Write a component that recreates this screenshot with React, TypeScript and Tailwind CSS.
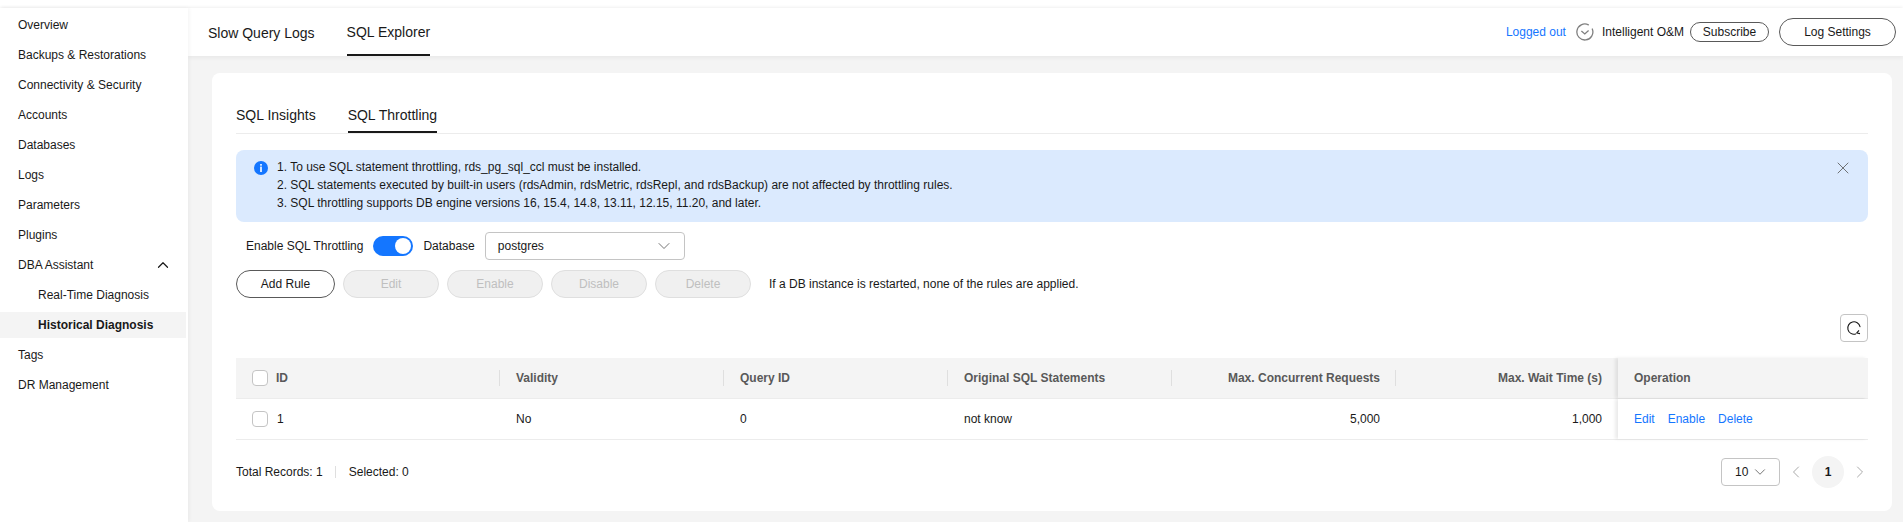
import React from 'react';
import { ChevronDown, ChevronLeft, ChevronRight, ChevronUp, X } from 'lucide-react';

const navItems = ['Overview', 'Backups & Restorations', 'Connectivity & Security', 'Accounts', 'Databases', 'Logs', 'Parameters', 'Plugins'];

const colClass = 'grid grid-cols-[264px_224px_224px_224px_224px_222px_250px]';

const HeadCell = ({ children, right, divider = true }: { children: React.ReactNode; right?: boolean; divider?: boolean }) => (
  <div className={`relative flex items-center px-4 ${right ? 'justify-end' : ''}`}>
    {children}
    {divider && <span className="absolute right-0 top-[12px] h-4 w-px bg-[#dfdfdf]" />}
  </div>
);

const Checkbox = () => <span className="h-4 w-4 rounded-[4px] border border-[#c4c4c4] bg-white" />;

const DisabledButton = ({ label }: { label: string }) => (
  <button type="button" className="h-7 w-24 rounded-full border border-[#dfdfdf] bg-[#f0f0f0] text-[#bfbfbf]">
    {label}
  </button>
);

const RefreshIcon = () => (
  <svg width="16" height="16" viewBox="0 0 16 16" fill="none" stroke="#191919" strokeWidth="1.1">
    <path d="M14 6.6A6.2 6.2 0 1 0 9.6 14" strokeLinecap="round" />
    <path d="M13 10.4 L10.8 13 L14 13.6" />
  </svg>
);

const App: React.FC = () => {
  return (
    <div className="flex h-[522px] flex-col overflow-hidden bg-white font-['Liberation_Sans',Arial,sans-serif] text-xs text-[#191919]">
      <div className="h-2 shrink-0 bg-white" />
      <div className="flex min-h-0 flex-1 bg-[#f4f4f4] shadow-[0_-1px_3px_rgba(0,0,0,0.06)]">
        <aside className="z-10 w-[188px] shrink-0 bg-white pt-[2px] shadow-[1px_0_4px_rgba(0,0,0,0.05)]">
          {navItems.map((item) => (
            <div key={item} className="flex h-[30px] items-center pl-[18px]">
              {item}
            </div>
          ))}
          <div className="flex h-[30px] items-center justify-between pl-[18px] pr-[16px]">
            DBA Assistant
            <ChevronUp size={18} strokeWidth={1.6} />
          </div>
          <div className="flex h-[30px] items-center pl-[38px]">Real-Time Diagnosis</div>
          <div className="mr-[2px] mt-[2px] mb-[2px] flex h-[26px] items-center bg-[#f4f4f4] pl-[38px] font-bold">Historical Diagnosis</div>
          <div className="flex h-[30px] items-center pl-[18px]">Tags</div>
          <div className="flex h-[30px] items-center pl-[18px]">DR Management</div>
        </aside>

        <main className="flex min-w-0 flex-1 flex-col">
          <header className="flex h-12 shrink-0 items-end justify-between bg-white pl-5 pr-[7px] shadow-[0_2px_4px_rgba(0,0,0,0.05)]">
            <div className="flex gap-8 text-sm">
              <div className="flex h-12 items-center pt-[1px]">Slow Query Logs</div>
              <div className="flex h-12 items-center border-b-2 border-[#191919] pt-[1px]">SQL Explorer</div>
            </div>
            <div className="flex h-12 items-center">
              <a className="mr-[10px] text-[#1476ff]">Logged out</a>
              <svg width="18" height="18" viewBox="0 0 18 18" fill="none" className="mr-2 shrink-0">
                <path d="M16.3 6A8 8 0 1 1 12.4 1.8" stroke="#808080" strokeWidth="1.3" strokeLinecap="round" />
                <path d="M5.4 8 L8.8 11 L12.6 7.6" stroke="#808080" strokeWidth="1.3" />
              </svg>
              <span className="mr-[6px]">Intelligent O&amp;M</span>
              <button type="button" className="mr-[10px] h-5 w-[79px] rounded-full border border-[#595959]">Subscribe</button>
              <button type="button" className="h-7 w-[117px] rounded-full border border-[#595959]">Log Settings</button>
            </div>
          </header>

          <section className="ml-6 mr-[11px] mt-[17px] h-[438px] rounded-lg bg-white px-6">
            <div className="flex h-[61px] items-end gap-8 border-b border-[#ececec] text-sm">
              <div className="flex h-[36px] items-start pt-2">SQL Insights</div>
              <div className="flex h-[36px] items-start border-b-2 border-[#191919] pt-2">SQL Throttling</div>
            </div>

            <div className="mt-4 flex h-[72px] items-start rounded-lg bg-[#dbeafe] pl-[18px] pr-[15px] pt-2 leading-[18px]">
              <svg width="14" height="14" viewBox="0 0 14 14" className="mr-[9px] mt-[3px] shrink-0">
                <circle cx="7" cy="7" r="7" fill="#1476ff" />
                <rect x="6.2" y="3" width="1.6" height="1.7" fill="#fff" />
                <rect x="6.2" y="5.6" width="1.6" height="5.4" fill="#fff" />
              </svg>
              <div className="flex-1">
                <p>1. To use SQL statement throttling, rds_pg_sql_ccl must be installed.</p>
                <p>2. SQL statements executed by built-in users (rdsAdmin, rdsMetric, rdsRepl, and rdsBackup) are not affected by throttling rules.</p>
                <p>3. SQL throttling supports DB engine versions 16, 15.4, 14.8, 13.11, 12.15, 11.20, and later.</p>
              </div>
              <X size={20} strokeWidth={1} className="text-[#595959]" />
            </div>

            <div className="mt-[10px] flex h-7 items-center pl-[10px]">
              <span className="mr-[10px]">Enable SQL Throttling</span>
              <span className="relative mr-[10px] h-5 w-10 rounded-full bg-[#1476ff]">
                <span className="absolute right-[2px] top-[2px] h-4 w-4 rounded-full bg-white" />
              </span>
              <span className="mr-[10px]">Database</span>
              <div className="flex h-7 w-[200px] items-center justify-between rounded-[4px] border border-[#c4c4c4] pl-3 pr-[10px]">
                postgres
                <ChevronDown size={20} strokeWidth={1} className="text-[#595959]" />
              </div>
            </div>

            <div className="mt-[10px] flex h-7 items-center gap-2">
              <button type="button" className="h-7 w-[99px] rounded-full border border-[#595959]">Add Rule</button>
              <DisabledButton label="Edit" />
              <DisabledButton label="Enable" />
              <DisabledButton label="Disable" />
              <DisabledButton label="Delete" />
              <span className="ml-[10px]">If a DB instance is restarted, none of the rules are applied.</span>
            </div>

            <div className="mt-4 flex justify-end">
              <button type="button" className="flex h-7 w-7 items-center justify-center rounded-[4px] border border-[#c4c4c4]">
                <RefreshIcon />
              </button>
            </div>

            <div className={`${colClass} mt-4 h-10 bg-[#f4f4f4] font-bold text-[#595959]`}>
              <HeadCell>
                <Checkbox />
                <span className="ml-2">ID</span>
              </HeadCell>
              <HeadCell>Validity</HeadCell>
              <HeadCell>Query ID</HeadCell>
              <HeadCell>Original SQL Statements</HeadCell>
              <HeadCell right>Max. Concurrent Requests</HeadCell>
              <HeadCell right divider={false}>Max. Wait Time (s)</HeadCell>
              <div className="flex items-center bg-[#f4f4f4] px-4 shadow-[-3px_0_3px_rgba(0,0,0,0.08)]">Operation</div>
            </div>
            <div className={`${colClass} h-[42px] border-y border-[#ececec]`}>
              <div className="flex items-center px-4">
                <Checkbox />
                <span className="ml-[9px]">1</span>
              </div>
              <div className="flex items-center px-4">No</div>
              <div className="flex items-center px-4">0</div>
              <div className="flex items-center px-4">not know</div>
              <div className="flex items-center justify-end px-4">5,000</div>
              <div className="flex items-center justify-end px-4">1,000</div>
              <div className="flex items-center gap-[13px] bg-white px-4 text-[#1476ff] shadow-[-3px_0_3px_rgba(0,0,0,0.08)]">
                <a>Edit</a>
                <a>Enable</a>
                <a>Delete</a>
              </div>
            </div>

            <div className="mt-4 flex h-8 items-center justify-between">
              <div className="flex items-center">
                <span>Total Records: 1</span>
                <span className="ml-[12px] mr-[13px] h-3 w-px bg-[#dfdfdf]" />
                <span>Selected: 0</span>
              </div>
              <div className="flex items-center">
                <div className="mr-2 flex h-7 w-[59px] items-center justify-between rounded-[4px] border border-[#c4c4c4] pl-[13px] pr-[10px]">
                  10
                  <ChevronDown size={18} strokeWidth={1.1} className="text-[#595959]" />
                </div>
                <ChevronLeft size={20} strokeWidth={1.2} className="-mx-[2px] text-[#aaaaaa]" />
                <span className="ml-2 flex h-8 w-8 items-center justify-center rounded-full bg-[#f4f4f4] font-bold">1</span>
                <ChevronRight size={20} strokeWidth={1.2} className="-mr-[2px] ml-[6px] text-[#aaaaaa]" />
              </div>
            </div>
          </section>
        </main>
      </div>
    </div>
  );
};

export default App;
